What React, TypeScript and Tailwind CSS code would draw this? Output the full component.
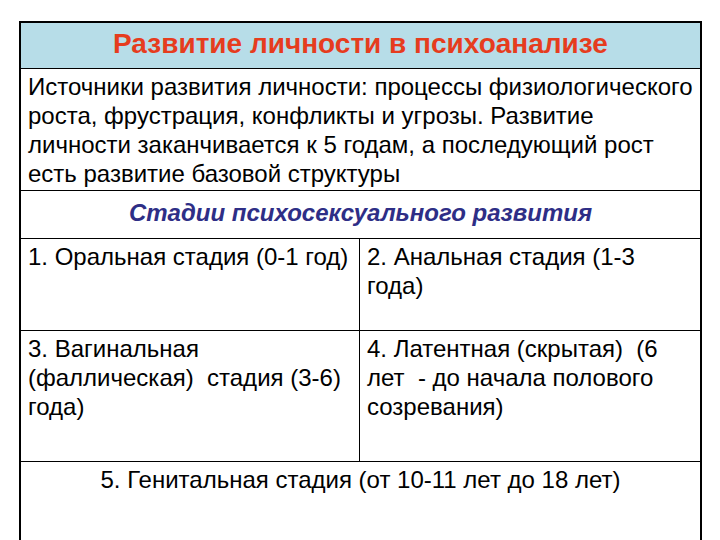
const font = "font-['Liberation_Sans',Arial,sans-serif]";

export default function App() {
  return (
    <div className={`min-h-[540px] w-[720px] bg-white pl-[19px] pt-[21px] ${font}`}>
      <div className="flex h-[519px] w-[683px] flex-col border-2 border-b-0 border-black text-[24px] leading-[29px] text-black">
        <div className="flex h-[46px] items-center justify-center border-b border-black bg-[#b7dde8] pb-[5px]">
          <h1 className="text-[28px] font-bold text-[#e63c1e]">Развитие личности в психоанализе</h1>
        </div>
        <div className="h-[122px] whitespace-nowrap border-b border-black px-[7px] pt-[3px]">
          Источники развития личности: процессы физиологического
          <br />
          роста, фрустрация, конфликты и угрозы. Развитие
          <br />
          личности заканчивается к 5 годам, а последующий рост
          <br />
          есть развитие базовой структуры
        </div>
        <div className="flex h-[48px] items-center justify-center border-b border-black pb-[5px]">
          <h2 className="font-bold italic text-[#2e2e86]">Стадии психосексуального развития</h2>
        </div>
        <div className="grid h-[92px] grid-cols-[339px_1fr] border-b border-black">
          <div className="whitespace-nowrap border-r border-black px-[7px] pt-[3px]">1. Оральная стадия (0-1 год)</div>
          <div className="whitespace-pre px-[7px] pt-[3px]">
            {"2. Анальная стадия (1-3\nгода)"}
          </div>
        </div>
        <div className="grid h-[131px] grid-cols-[339px_1fr] border-b border-black">
          <div className="whitespace-pre border-r border-black px-[7px] pt-[3px]">
            {"3. Вагинальная\n(фаллическая)  стадия (3-6)\nгода)"}
          </div>
          <div className="whitespace-pre px-[7px] pt-[3px]">
            {"4. Латентная (скрытая)  (6\nлет  - до начала полового\nсозревания)"}
          </div>
        </div>
        <div className="flex-1 px-[7px] pt-[3px] text-center">5. Генитальная стадия (от 10-11 лет до 18 лет)</div>
      </div>
    </div>
  );
}
